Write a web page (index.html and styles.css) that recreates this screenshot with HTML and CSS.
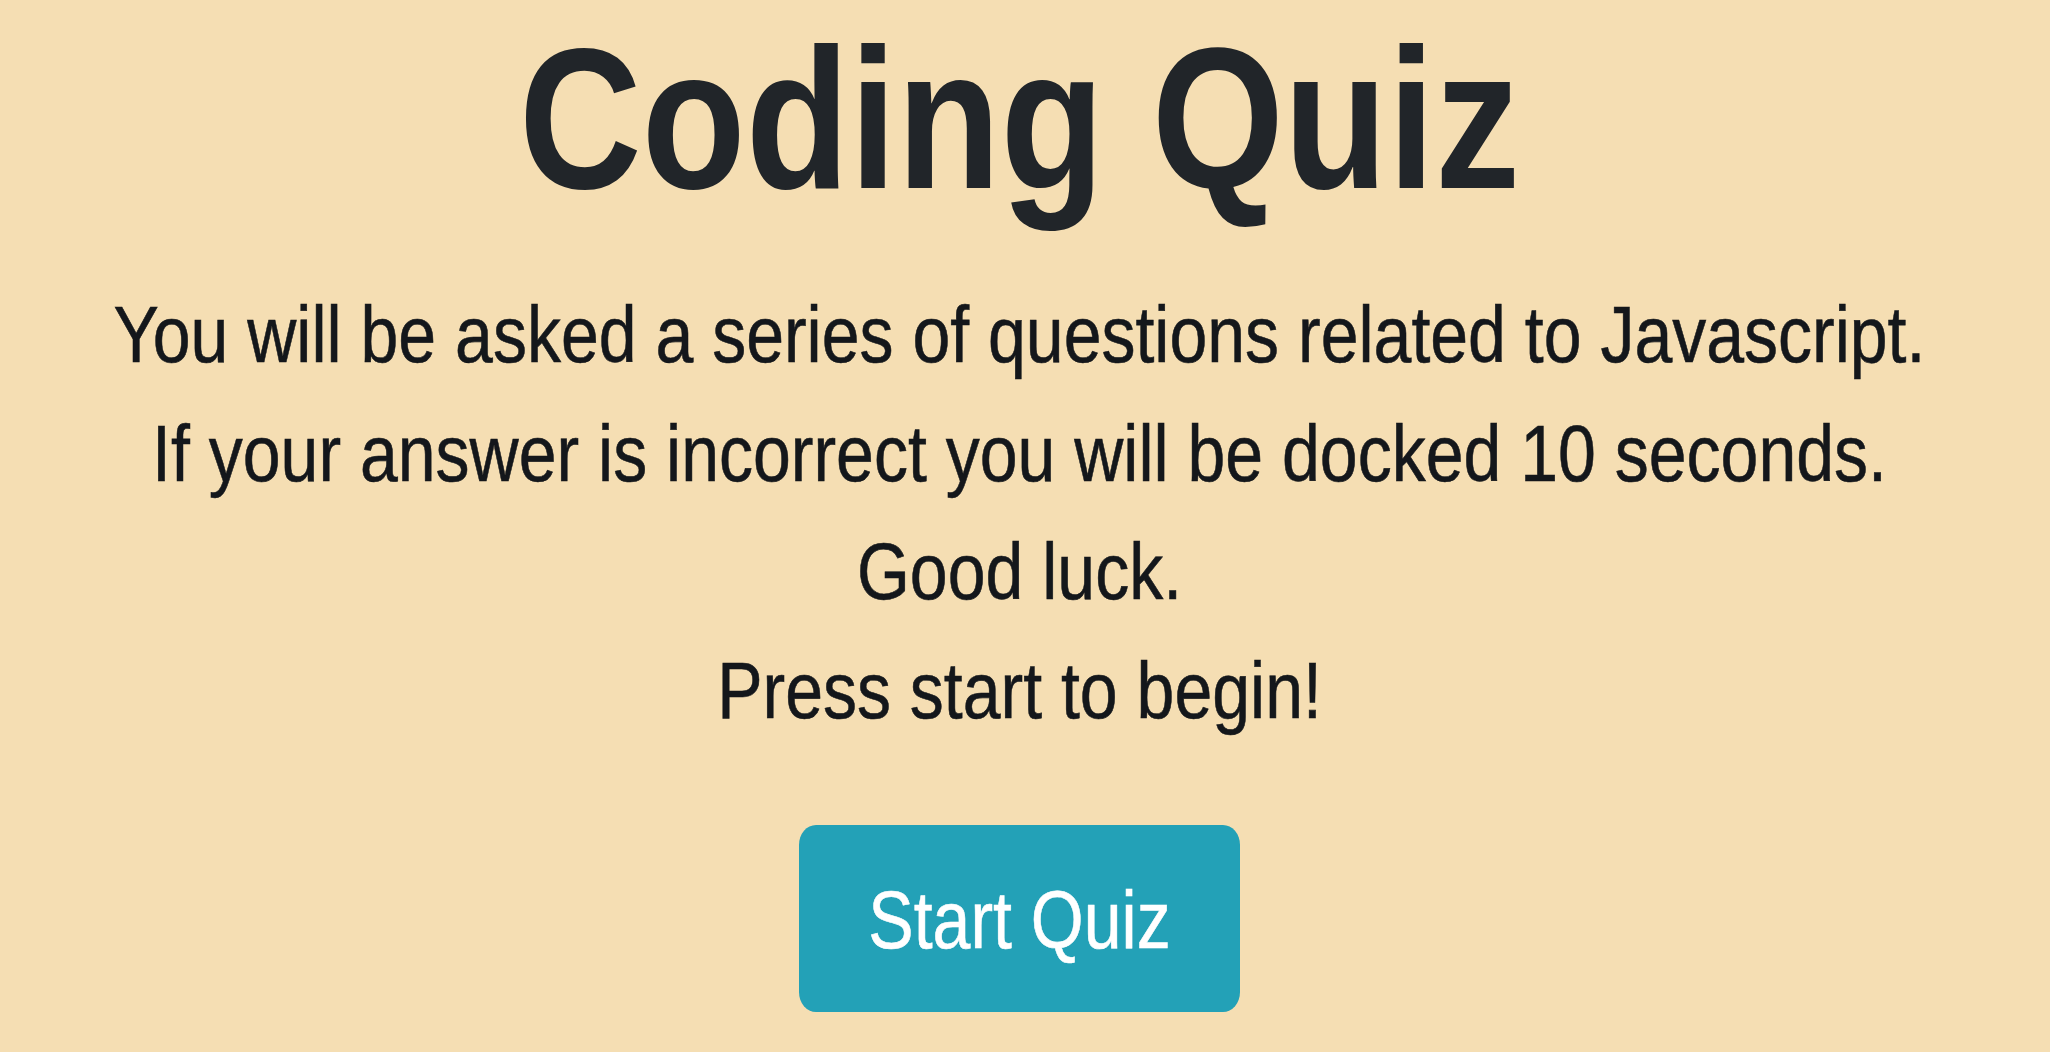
FILE: index.html
```html
<!DOCTYPE html>
<html lang="en">
<head>
<meta charset="utf-8">
<title>Coding Quiz</title>
<link rel="stylesheet" href="styles.css">
</head>
<body>
  <main class="page">
    <h1 class="title">Coding Quiz</h1>
    <div class="intro">
      <p class="line">You will be asked a series of questions related to Javascript.</p>
      <p class="line">If your answer is incorrect you will be docked 10 seconds.</p>
      <p class="line">Good luck.</p>
      <p class="line">Press start to begin!</p>
    </div>
    <div class="actions">
      <button class="start-btn" type="button"><span class="start-label">Start Quiz</span></button>
    </div>
  </main>
</body>
</html>
```
FILE: styles.css
```css
html, body {
  margin: 0;
  padding: 0;
}

body {
  background: #f5deb3;
  font-family: "Liberation Sans", Arial, Helvetica, sans-serif;
}

.page {
  padding: 44px 11px 0 0;
  text-align: center;
}

.title {
  margin: 0;
  font-size: 170px;
  line-height: 170px;
  font-weight: 700;
  color: #212529;
  transform: scaleY(1.175);
  transform-origin: 50% 143.9px;
}

.intro {
  margin-top: 65px;
}

.line {
  margin: 0;
  font-size: 68px;
  line-height: 118.5px;
  color: #14171b;
  -webkit-text-stroke: 0.5px #14171b;
  transform: scaleY(1.16);
  transform-origin: 50% 82.8px;
}

.actions {
  display: flex;
  justify-content: center;
  margin-top: 72px;
}

.start-btn {
  display: flex;
  align-items: center;
  justify-content: center;
  width: 441px;
  height: 187px;
  padding: 0;
  border: 0;
  border-radius: 17px / 20px;
  background: #23a1b7;
  color: #ffffff;
  font-family: "Liberation Sans", Arial, Helvetica, sans-serif;
  font-size: 68px;
  cursor: pointer;
}

.start-label {
  display: block;
  line-height: 68px;
  -webkit-text-stroke: 0.5px #ffffff;
  transform: scaleY(1.19);
}
```
